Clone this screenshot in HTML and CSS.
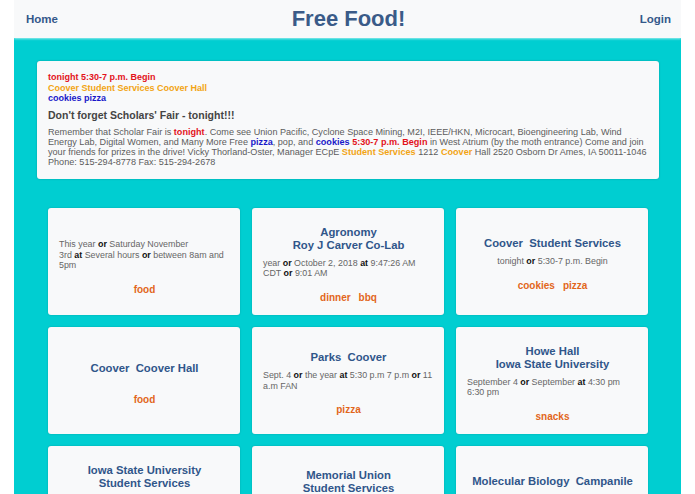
FILE: index.html
```html
<!DOCTYPE html>
<html lang="en">
<head>
<meta charset="utf-8">
<title>Free Food!</title>
<link rel="stylesheet" href="styles.css">
</head>
<body>
<div class="page">
  <header class="topbar">
    <a class="nav-link" href="#">Home</a>
    <h1 class="brand">Free Food!</h1>
    <a class="nav-link" href="#">Login</a>
  </header>
  <main class="main">
    <section class="announce">
      <div class="hl red">tonight 5:30-7 p.m. Begin</div>
      <div class="hl orange">Coover Student Services Coover Hall</div>
      <div class="hl blue">cookies pizza</div>
      <h2 class="announce-title">Don't forget Scholars' Fair - tonight!!!</h2>
      <p class="announce-text">Remember that Scholar Fair is <b class="red">tonight</b>. Come see Union Pacific, Cyclone Space Mining, M2I, IEEE/HKN, Microcart, Bioengineering Lab, Wind Energy Lab, Digital Women, and Many More Free <b class="blue">pizza</b>, pop, and <b class="blue">cookies</b> <b class="red">5:30-7 p.m. Begin</b> in West Atrium (by the moth entrance) Come and join your friends for prizes in the drive! Vicky Thorland-Oster, Manager ECpE <b class="orange">Student Services</b> 1212 <b class="orange">Coover</b> Hall 2520 Osborn Dr Ames, IA 50011-1046 Phone: 515-294-8778 Fax: 515-294-2678</p>
    </section>

    <section class="grid">
      <article class="card">
        <div class="card-title"></div>
        <div class="card-body"><span class="when">This year <b>or</b> Saturday November<br>3rd <b>at</b> Several hours <b>or</b> between 8am and 5pm</span></div>
        <div class="tags"><span class="tag">food</span></div>
      </article>
      <article class="card">
        <div class="card-title">Agronomy<br>Roy J Carver Co-Lab</div>
        <div class="card-body"><span class="when">year <b>or</b> October 2, 2018 <b>at</b> 9:47:26 AM CDT <b>or</b> 9:01 AM</span></div>
        <div class="tags"><span class="tag">dinner</span><span class="tag">bbq</span></div>
      </article>
      <article class="card">
        <div class="card-title">Coover&nbsp; Student Services</div>
        <div class="card-body"><span class="when">tonight <b>or</b> 5:30-7 p.m. Begin</span></div>
        <div class="tags"><span class="tag">cookies</span><span class="tag">pizza</span></div>
      </article>
      <article class="card">
        <div class="card-title">Coover&nbsp; Coover Hall</div>
        <div class="card-body"></div>
        <div class="tags"><span class="tag">food</span></div>
      </article>
      <article class="card">
        <div class="card-title">Parks&nbsp; Coover</div>
        <div class="card-body"><span class="when">Sept. 4 <b>or</b> the year <b>at</b> 5:30 p.m 7 p.m <b>or</b> 11 a.m FAN</span></div>
        <div class="tags"><span class="tag">pizza</span></div>
      </article>
      <article class="card">
        <div class="card-title">Howe Hall<br>Iowa State University</div>
        <div class="card-body"><span class="when">September 4 <b>or</b> September <b>at</b> 4:30 pm 6:30 pm</span></div>
        <div class="tags"><span class="tag">snacks</span></div>
      </article>
      <article class="card">
        <div class="card-title">Iowa State University<br>Student Services</div>
        <div class="card-body"><span class="when">April 16 <b>or</b> Monday <b>at</b> 11 a.m. to 1 p.m. <b>or</b> noon lunch</span></div>
        <div class="tags"><span class="tag">lunch</span></div>
      </article>
      <article class="card">
        <div class="card-title">Memorial Union<br>Student Services</div>
        <div class="card-body"><span class="when">today <b>or</b> 2 p.m. Begin</span></div>
        <div class="tags"><span class="tag">cookies</span></div>
      </article>
      <article class="card">
        <div class="card-title">Molecular Biology&nbsp; Campanile</div>
        <div class="card-body"><span class="when">April 23 <b>or</b> Monday <b>at</b> 10 a.m. to 11 a.m.</span></div>
        <div class="tags"><span class="tag">donuts</span></div>
      </article>
    </section>
  </main>
</div>
</body>
</html>
```
FILE: styles.css
```css
* { box-sizing: border-box; }
html, body { margin: 0; padding: 0; background: #ffffff; }
body { font-family: "Liberation Sans", Arial, sans-serif; color: #555; }

.page {
  width: 667px;
  margin: 0 auto;
  min-height: 494px;
  background: #00ced1;
}

.topbar {
  height: 38px;
  background: #f8f9fa;
  display: flex;
  align-items: center;
  justify-content: space-between;
  padding: 0 10px 0 12px;
  box-shadow: 0 1px 2px rgba(255,255,255,0.6);
  position: relative;
}
.nav-link {
  font-weight: bold;
  font-size: 11.5px;
  color: #34588a;
  text-decoration: none;
  width: 60px;
}
.nav-link:last-child { text-align: right; }
.brand {
  margin: 0;
  font-size: 22px;
  font-weight: bold;
  color: #3a5b88;
  line-height: 26px;
}

.main {
  padding: 23px 22px 20px 23px;
}

.announce {
  background: #f8f9fa;
  border-radius: 3px;
  box-shadow: 0 0 2px rgba(0,0,0,0.25);
  padding: 11px 12px 12px 11px;
  height: 118px;
}
.hl {
  font-weight: bold;
  font-size: 9px;
  line-height: 10.6px;
}
.red { color: #e3121b; }
.orange { color: #f2a414; }
.blue { color: #1818c9; }
.announce-title {
  margin: 5px 0 6px 0;
  font-size: 10.5px;
  line-height: 12px;
  color: #444;
  font-weight: bold;
}
.announce-text {
  margin: 0;
  font-size: 9.1px;
  line-height: 10px;
  color: #5c5c5c;
}

.grid {
  margin-top: 29px;
  display: grid;
  grid-template-columns: repeat(3, 192px);
  gap: 12px;
  justify-content: center;
}
.card {
  height: 107px;
  background: #f8f9fa;
  border-radius: 3px;
  box-shadow: 0 0 2px rgba(0,0,0,0.2);
  padding: 6px 10px 0 11px;
  display: flex;
  flex-direction: column;
  justify-content: center;
}
.card-title {
  text-align: center;
  font-weight: bold;
  font-size: 11.3px;
  line-height: 13px;
  color: #30568a;
  margin-bottom: 6px;
}
.card-body {
  text-align: center;
  font-size: 8.9px;
  line-height: 10.5px;
  color: #666;
}
.when {
  display: inline-block;
  text-align: left;
}
.when b { color: #111; }
.tags {
  margin-top: 11px;
  text-align: center;
  line-height: 12px;
}
.tag {
  font-weight: bold;
  font-size: 10px;
  color: #e2661b;
  margin: 0 4px;
}
```
